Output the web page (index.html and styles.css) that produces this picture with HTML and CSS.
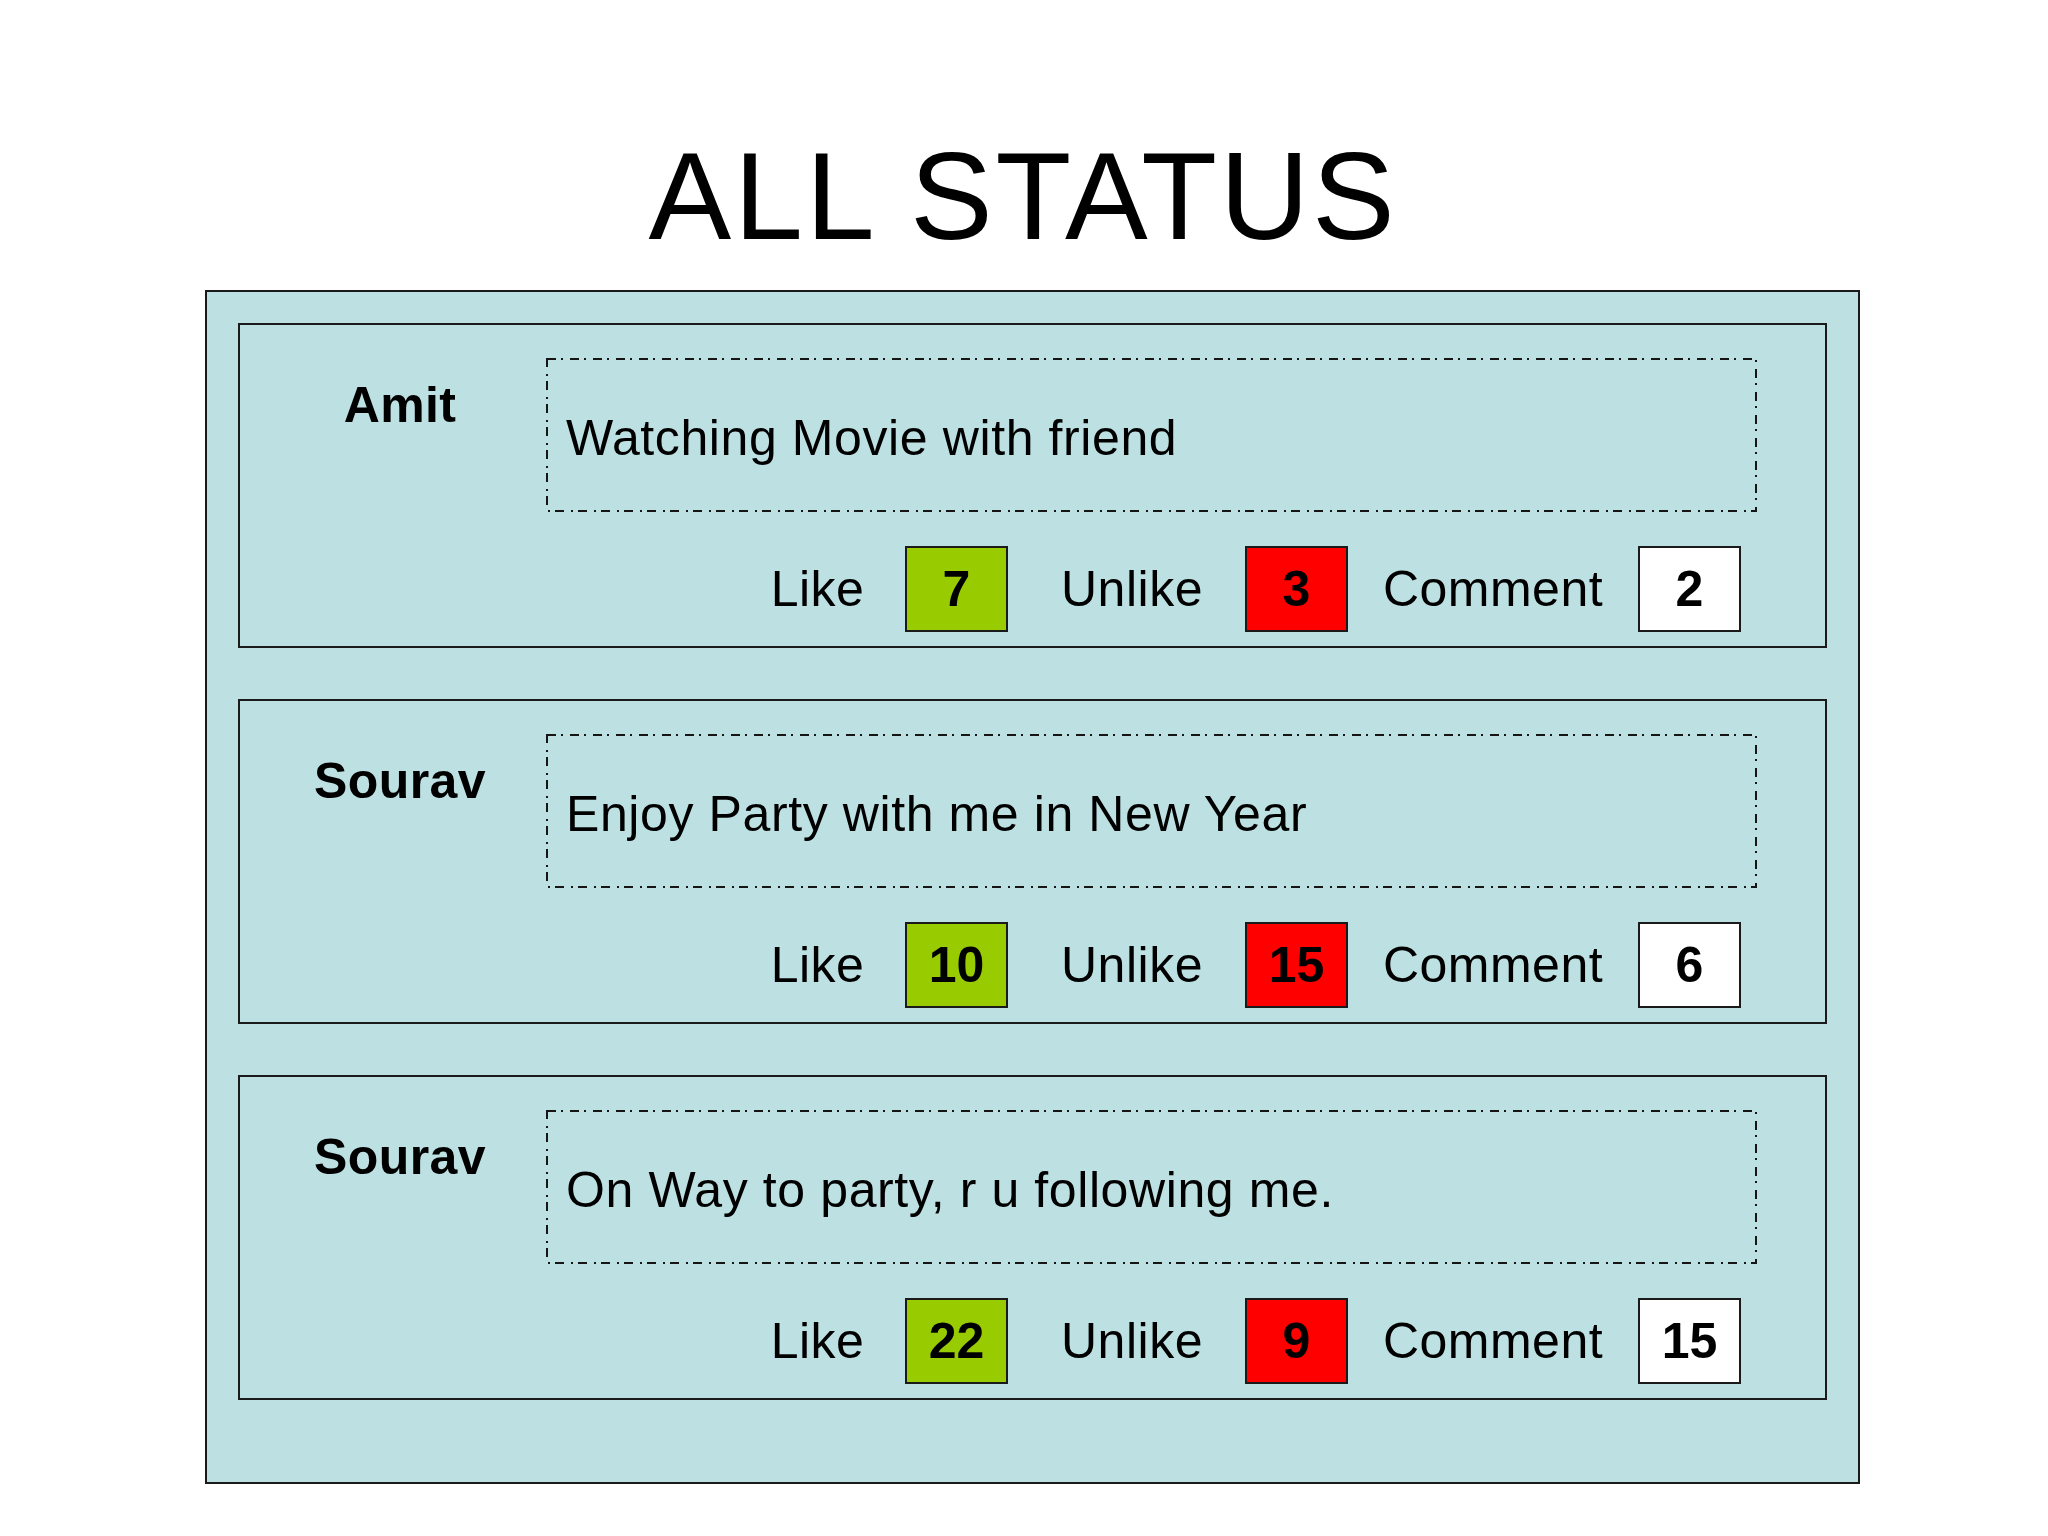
FILE: index.html
```html
<!DOCTYPE html>
<html>
<head>
<meta charset="utf-8">
<title>ALL STATUS</title>
<link rel="stylesheet" href="styles.css">
</head>
<body>
<h1 class="title">ALL STATUS</h1>
<div class="panel">
  <div class="card">
    <div class="name">Amit</div>
    <div class="status">Watching Movie with friend</div>
    <div class="stats">
      <span class="label label-like">Like</span><span class="count like">7</span>
      <span class="label label-unlike">Unlike</span><span class="count unlike">3</span>
      <span class="label label-comment">Comment</span><span class="count comment">2</span>
    </div>
  </div>
  <div class="card">
    <div class="name">Sourav</div>
    <div class="status">Enjoy Party with me in New Year</div>
    <div class="stats">
      <span class="label label-like">Like</span><span class="count like">10</span>
      <span class="label label-unlike">Unlike</span><span class="count unlike">15</span>
      <span class="label label-comment">Comment</span><span class="count comment">6</span>
    </div>
  </div>
  <div class="card">
    <div class="name">Sourav</div>
    <div class="status">On Way to party, r u following me.</div>
    <div class="stats">
      <span class="label label-like">Like</span><span class="count like">22</span>
      <span class="label label-unlike">Unlike</span><span class="count unlike">9</span>
      <span class="label label-comment">Comment</span><span class="count comment">15</span>
    </div>
  </div>
</div>
</body>
</html>
```

FILE: styles.css
```css
* { box-sizing: border-box; }

html, body {
  margin: 0;
  padding: 0;
  background: #ffffff;
}

body {
  font-family: "Liberation Sans", Arial, sans-serif;
  color: #000;
  width: 2048px;
  height: 1536px;
  overflow: hidden;
}

.title {
  margin: 0;
  padding-top: 134px;
  height: 258px;
  font-size: 124px;
  line-height: 124px;
  font-weight: normal;
  text-align: center;
  letter-spacing: 2.8px;
  padding-right: 2px;
}

.panel {
  margin: 32px 0 0 205px;
  width: 1655px;
  height: 1194px;
  background: #bde0e3;
  border: 2px solid #1a1a1a;
  padding: 31px;
  display: flex;
  flex-direction: column;
  gap: 51px;
}

.card {
  width: 1589px;
  height: 325px;
  border: 2px solid #1a1a1a;
  padding-top: 33px;
  display: grid;
  grid-template-columns: 306px 1211px;
  grid-template-rows: 154px auto;
  align-content: start;
}

.name {
  padding-top: 22px;
  padding-left: 14px;
  text-align: center;
  font-size: 50px;
  line-height: 50px;
  font-weight: bold;
  letter-spacing: 0.4px;
}

.status {
  height: 154px;
  display: flex;
  align-items: center;
  padding: 6px 0 0 20px;
  font-size: 50px;
  line-height: 50px;
  letter-spacing: 0.6px;
  background-image: url("data:image/svg+xml,%3Csvg xmlns='http://www.w3.org/2000/svg' width='1211' height='154'%3E%3Crect x='1' y='1' width='1209' height='152' fill='none' stroke='%23151515' stroke-width='2' stroke-dasharray='9 5 2 7'/%3E%3C/svg%3E");
  background-repeat: no-repeat;
}

.stats {
  grid-column: 1 / span 2;
  margin-top: 34px;
  margin-left: 500px;
  display: flex;
  align-items: center;
  height: 86px;
}

.label {
  font-size: 50px;
  line-height: 86px;
  text-align: center;
  letter-spacing: 0.5px;
}

.label-like { width: 155px; }
.label-unlike { width: 226px; margin-left: 11px; }
.label-comment { width: 290px; }

.count {
  width: 103px;
  height: 86px;
  border: 2px solid #1a1a1a;
  font-size: 50px;
  line-height: 82px;
  font-weight: bold;
  text-align: center;
}

.like { background: #99cc00; margin-left: 10px; }
.unlike { background: #ff0000; }
.comment { background: #ffffff; }
```
